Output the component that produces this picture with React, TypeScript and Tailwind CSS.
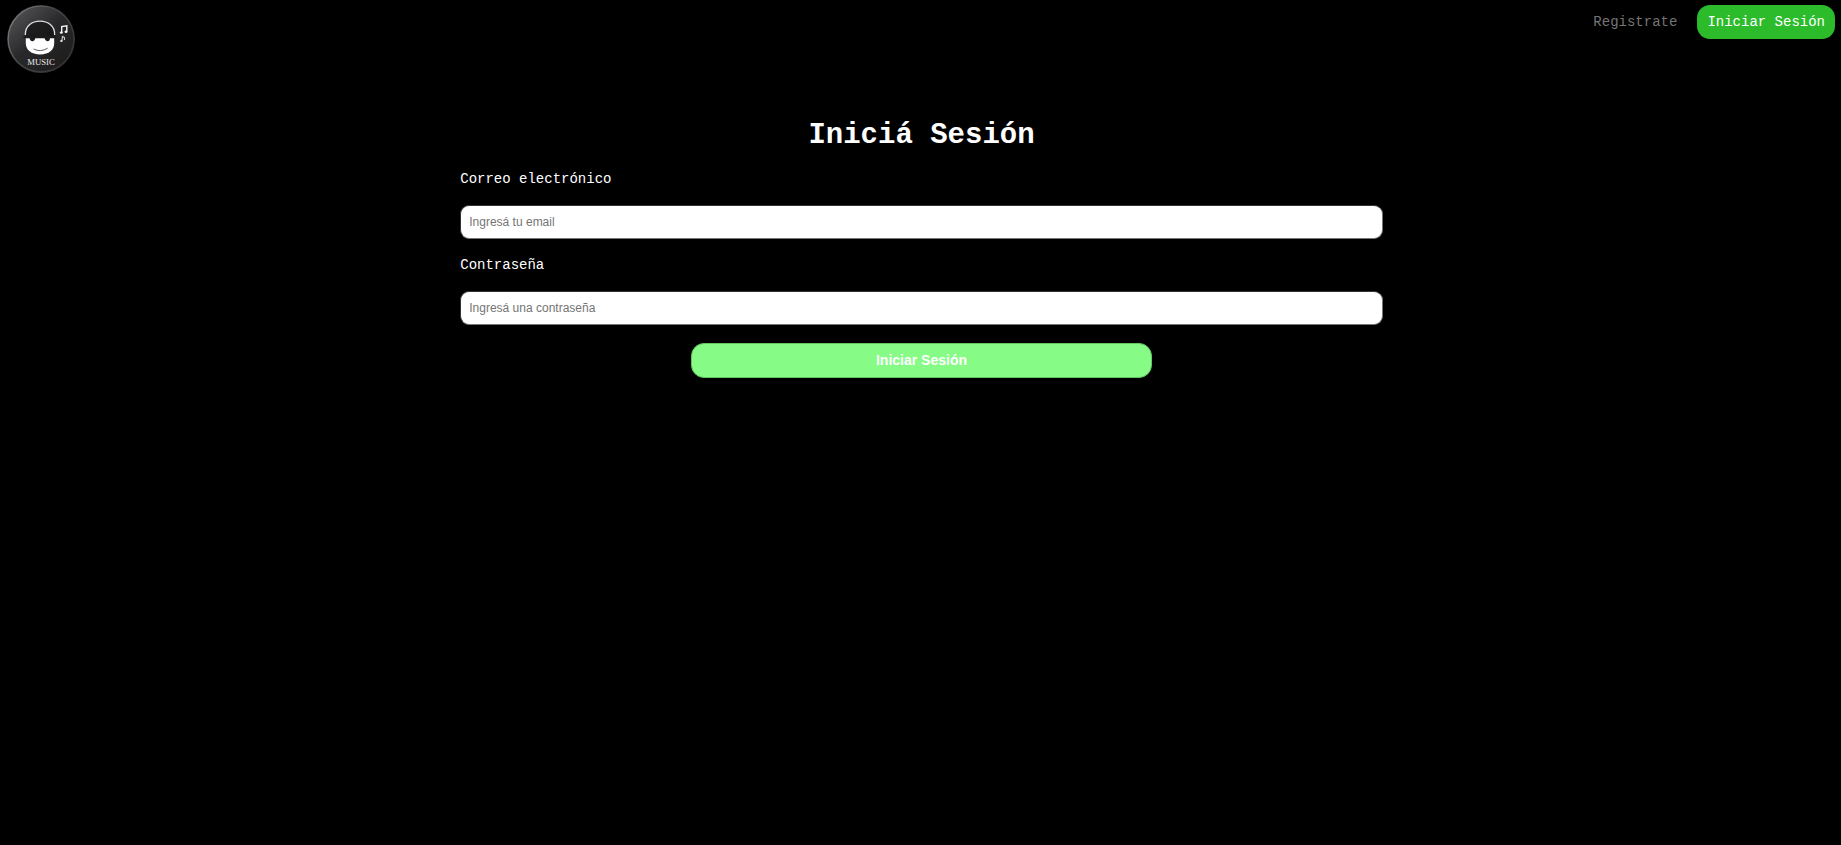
function Logo() {
  return (
    <svg viewBox="0 0 68 68" className="h-[68px] w-[68px]" role="img" aria-label="Music">
      <defs>
        <linearGradient id="disc" x1="0.1" y1="0.1" x2="0.8" y2="0.9">
          <stop offset="0" stopColor="#505052" />
          <stop offset="0.5" stopColor="#29292b" />
          <stop offset="1" stopColor="#1f1d1e" />
        </linearGradient>
        <linearGradient id="rim" x1="0" y1="0.2" x2="1" y2="0.8">
          <stop offset="0" stopColor="#858587" />
          <stop offset="0.4" stopColor="#4a4a4c" />
          <stop offset="1" stopColor="#333335" />
        </linearGradient>
        <linearGradient id="hair" x1="0" y1="0" x2="1" y2="1">
          <stop offset="0" stopColor="#222223" />
          <stop offset="1" stopColor="#151516" />
        </linearGradient>
      </defs>
      <circle cx="34" cy="34" r="34" fill="#303032" />
      <circle cx="34" cy="34" r="32.8" fill="url(#disc)" stroke="url(#rim)" strokeWidth="1.2" />
      <path d="M18.4 33 C16.5 10.5 49.5 10.5 47.6 33Z" fill="url(#hair)" />
      <path d="M18.4 30 C17.4 11.5 48.6 11.5 47.6 30" fill="none" stroke="#dedede" strokeWidth="1.3" />
      <path d="M18.8 32 H47.2 V38 C47.2 45 42 49.4 33.2 49.4 C24.2 49.4 18.8 45 18.8 38Z" fill="#fff" />
      <path d="M15.7 31.5 C22 30 44 29 49 31.5 V33.2 H43 C43 37 38.8 37.2 37.5 33.2 H28.3 C27.5 37.2 23.2 37 22.5 33.2 H17Z" fill="#1b1b1c" />
      <path d="M26.6 44 Q33.5 47.6 40.6 43.2" fill="none" stroke="#4a4a4a" strokeWidth="0.9" />
      <path d="M54.7 27.3 V21.6 L59.8 20.9 V26.5" fill="none" stroke="#f5f5f5" strokeWidth="1.4" />
      <ellipse cx="54.3" cy="27.6" rx="1.5" ry="1.2" fill="#f5f5f5" />
      <ellipse cx="59" cy="26.8" rx="1.5" ry="1.2" fill="#f5f5f5" />
      <path d="M54.9 35.8 L55.5 31.5 Q58.2 32 57.4 35" fill="none" stroke="#d5d5d5" strokeWidth="1.1" />
      <ellipse cx="54.4" cy="35.9" rx="1.3" ry="1" fill="#e5e5e5" />
      <text x="34" y="59.6" textAnchor="middle" fontSize="8.7" fontFamily="Liberation Serif, serif" fill="#ededed">
        MUSIC
      </text>
    </svg>
  );
}

type FieldProps = { id: string; label: string; type: string; placeholder: string };

function Field({ id, label, type, placeholder }: FieldProps) {
  return (
    <div className="flex flex-col gap-[18px]">
      <label htmlFor={id} className="text-[14px] leading-4">
        {label}
      </label>
      <input
        id={id}
        type={type}
        placeholder={placeholder}
        className="h-[34px] w-full rounded-[9px] border border-t-[#333333] border-r-[#767676] border-b-[#767676] border-l-[#333333] bg-white px-[8px] font-['Liberation_Sans',sans-serif] text-[12px] text-black placeholder:text-[#757575]"
      />
    </div>
  );
}

export default function App() {
  return (
    <div className="min-h-screen bg-black font-['Liberation_Mono',monospace] text-white">
      <header className="flex items-start justify-between px-[6px] pt-[5px]">
        <a href="#inicio" className="ml-px block">
          <Logo />
        </a>
        <nav className="flex items-center gap-[10px] text-[14px]">
          <a href="#registro" className="px-[10px] text-[#757575]">
            Registrate
          </a>
          <a href="#sesion" className="flex h-[34px] items-center rounded-[13px] bg-[#2bbb2b] px-[10px]">
            Iniciar Sesión
          </a>
        </nav>
      </header>
      <main>
        <form className="mt-[46px] ml-[25%] flex w-[calc(50%+2px)] flex-col gap-[18px]">
          <h1 className="text-center text-[29px] leading-[34px] font-bold">Iniciá Sesión</h1>
          <Field id="email" label="Correo electrónico" type="email" placeholder="Ingresá tu email" />
          <Field id="password" label="Contraseña" type="password" placeholder="Ingresá una contraseña" />
          <button
            type="button"
            className="h-[35px] w-1/2 self-center rounded-[13px] border border-[#62c862] bg-[#86fb86] font-['Liberation_Sans',sans-serif] text-[14px] font-bold text-white"
          >
            Iniciar Sesión
          </button>
        </form>
      </main>
    </div>
  );
}
